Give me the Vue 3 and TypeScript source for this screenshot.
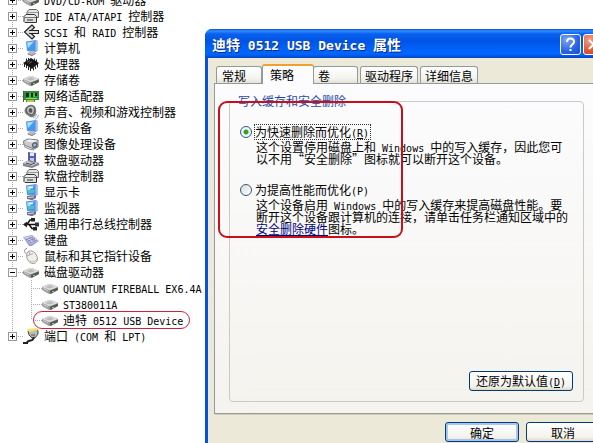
<script setup lang="ts">
import { ref } from 'vue'

interface Shape {
  d: string
  fill?: string
  stroke?: string
  width?: number
}

interface TreeNode {
  label: string
  icon: string
  open?: boolean
  children?: { label: string; marked?: boolean }[]
}

interface Run {
  text: string
  latin: boolean
}

const disk: Shape[] = [
  { d: 'M0 7 7 4 9 4 16 7V10L9 14H7L0 10Z', fill: '#9a9a9a' },
  { d: 'M0 7 7 4H9L16 7 9 10H7Z', fill: '#dcdcdc' },
  { d: 'M3 7 8 5 12 7 8 8.500Z', fill: '#bcbcbc' },
  { d: 'M8 10.500 16 7.500V10L9 13.500H8Z', fill: '#585858' },
  { d: 'M1 8.500 6 11', stroke: '#d0d0d0' },
  { d: 'M10 11h2v1h-2Z', fill: '#7ad37a' },
]

const drives: Shape[] = [
  { d: 'M4 4 6 1.500H13.500L15.500 3.500V9.500H4Z', fill: '#e4e4e4', stroke: '#666' },
  { d: 'M5 4.500H15', stroke: '#999' },
  { d: 'M1 8.500 3 6.500H11.500L13.500 8.500V14.500H2L1 13.500Z', fill: '#dedede', stroke: '#333' },
  { d: 'M1 9.500H13', stroke: '#777' },
  { d: 'M4 12H10', stroke: '#333' },
  { d: 'M3 8H11', stroke: '#fff' },
]

const computer: Shape[] = [
  { d: 'M3 1.500 13 0 14.500 1V11L12 12 4 11Z', fill: '#6d8fd0' },
  { d: 'M3.500 2 12 1V10L4.500 10Z', fill: '#3c9cf4' },
  { d: 'M4 2.500 11 1.500 5 8Z', fill: '#a8dcff' },
  { d: 'M12.500 0.500 14 1V10.500L12.500 11Z', fill: '#a9bce4' },
  { d: 'M7 11H11L13 13.500 9 16 4 14Z', fill: '#b4bccc' },
  { d: 'M5 14 9 15.500 12.500 13.500', stroke: '#77809a' },
]

const display: Shape[] = [
  ...computer,
  { d: 'M5 6 11 5.500V8.500L5 9.500Z', fill: '#4cc4c4' },
  { d: 'M6 3.500H10', stroke: '#fff' },
  { d: 'M4 12 13 11.500V14L9 16 4 15Z', fill: '#66758c' },
  { d: 'M5 13.500 11 13', stroke: '#d7dce5' },
]

const icons: Record<string, Shape[]> = {
  disk,
  drives,
  computer,
  display,
  dvd: [
    ...disk,
    { d: 'M3 5.500C4 3 12 3 13 5.500 12 8 4 8 3 5.500Z', fill: '#eee', stroke: '#999' },
  ],
  scsi: [
    { d: 'M9 1 1.500 8 9 15 11.500 12.500 6.500 8 11.500 3.500Z', fill: '#ddd', stroke: '#222', width: 1.2 },
    { d: 'M6 8H16', stroke: '#222', width: 4 },
    { d: 'M6 8H15', stroke: '#ddd', width: 2 },
  ],
  chip: [
    { d: 'M0 7 8 2 16 7 9 13Z', fill: '#161616' },
    { d: 'M1.500 8V11M3.500 9V12M5.500 10.500V14M7.500 11.500V15M10.500 12V14.500M12.500 10.500V13M14.500 8V11.500M3.500 2.500V5M5.500 2V4M11.500 2.500V5M13.500 3.500V6', stroke: '#222' },
    { d: 'M4 6.500 7 4.500M6 7.500 9 5.500', stroke: '#666' },
  ],
  network: [
    { d: 'M0 3H16V12H12V14H3V12H1Z', fill: '#2c8f35' },
    { d: 'M0.500 3V14', stroke: '#555' },
    { d: 'M3 5H6V9H3ZM8 5H10V9H8ZM12 5H14V8H12Z', fill: '#0a2b0d' },
    { d: 'M3 10.500H14M7 5V10M11 5V9', stroke: '#7cdc78' },
    { d: 'M4 12H11V14H4Z', fill: '#c7c34c' },
  ],
  speaker: [
    { d: 'M7 1C12 0 14 5 13 9 12 13 9 14 7 13L3 10C0 7 2 2 7 1Z', fill: '#777' },
    { d: 'M7 2C11 1 12 5 11 8 10 12 6 11 4 8 3 5 4 3 7 2Z', fill: '#c9c9d2', stroke: '#555' },
    { d: 'M7 4C10 4 10 8 8 9 5 9 5 5 7 4Z', fill: '#555' },
    { d: 'M10 14Q13 13 13.500 10M12 15.500Q15 14 15.500 11', stroke: '#9a9ee8' },
  ],
  camera: [
    { d: 'M0.500 5 5 3 15 4V11L11 13 1 9Z', fill: '#c8ccd2', stroke: '#777' },
    { d: 'M2 5 6 3.500 14 4.500 10 6.500Z', fill: '#f2f2f2' },
    { d: 'M11.500 6C15.500 5.500 15.500 12 11.500 12 8 12 8 6.500 11.500 6Z', fill: '#5b626e' },
    { d: 'M11.500 7.500C13.500 7.500 13.500 10.500 11.500 10.500 10 10.500 10 7.500 11.500 7.500Z', fill: '#a4c8e6' },
    { d: 'M1 10.500 6 13 11 14', stroke: '#888' },
  ],
  floppy: [
    { d: 'M5 0 13 1V11L5 10Z', fill: '#5660b0' },
    { d: 'M7 0.500H11V4H7Z', fill: '#e8e8f8' },
    { d: 'M7 6H11V10H7Z', fill: '#c4c9ee' },
    { d: 'M0 11 6 8 16 11V13L9 16 0 14Z', fill: '#80838e' },
    { d: 'M0 11 5 9 8 10.500H12L15 11 9 14Z', fill: '#d0d2d8' },
    { d: 'M3 11 8 12.500 12 11', stroke: '#444' },
  ],
  usb: [
    { d: 'M1 8.500H14M4 8.500 7 4H10M6 8.500 9 12.500H12', stroke: '#111', width: 1.5 },
    { d: 'M0 8.500 4 5.500V11.500ZM8 2H12V5.500H8ZM10 11H14V14.500H10Z', fill: '#222' },
    { d: 'M12 6.500H16V10.500H12Z', fill: '#333' },
  ],
  keyboard: [
    { d: 'M0 5 9 3 16 9 9 14 6 14Z', fill: '#9c9fd0' },
    { d: 'M1 5.500 9 4 15 9 8 12Z', fill: '#dcddf4' },
    { d: 'M3 6.500 9 11M6 5.500 12 10M8 5 13 9M3 7.500 10 5M5 9 12 6.500M7 11 14 8.500', stroke: '#8487bc' },
  ],
  mouse: [
    { d: 'M4 0.500C1 1 0.500 4 3.500 6', stroke: '#888' },
    { d: 'M4 5C6 1.500 11 2.500 13 6.500 16 11 14 15.500 10 15.500 6 15.500 2.500 10 4 5Z', fill: '#f0efea', stroke: '#9b9a94' },
    { d: 'M4 8 10 5.500M7 7 6 4', stroke: '#aaa' },
    { d: 'M7 13Q12 15 14 11', stroke: '#c2c0b8' },
  ],
  port: [
    { d: 'M5 3 14 1 15 3V6L12 10H9L6 7Z', fill: '#bcbcb4', stroke: '#444' },
    { d: 'M4 1 14 0 15 2 6 4Z', fill: '#f3e36c' },
    { d: 'M10.500 9Q11 12 7.500 12.500T4 15H0', stroke: '#222', width: 2 },
    { d: 'M8 7H12', stroke: '#555' },
  ],
}

const nodes = ref<TreeNode[]>([
  { label: 'DVD/CD-ROM 驱动器', icon: 'dvd' },
  { label: 'IDE ATA/ATAPI 控制器', icon: 'drives' },
  { label: 'SCSI 和 RAID 控制器', icon: 'scsi' },
  { label: '计算机', icon: 'computer' },
  { label: '处理器', icon: 'chip' },
  { label: '存储卷', icon: 'disk' },
  { label: '网络适配器', icon: 'network' },
  { label: '声音、视频和游戏控制器', icon: 'speaker' },
  { label: '系统设备', icon: 'computer' },
  { label: '图像处理设备', icon: 'camera' },
  { label: '软盘驱动器', icon: 'floppy' },
  { label: '软盘控制器', icon: 'drives' },
  { label: '显示卡', icon: 'display' },
  { label: '监视器', icon: 'display' },
  { label: '通用串行总线控制器', icon: 'usb' },
  { label: '键盘', icon: 'keyboard' },
  { label: '鼠标和其它指针设备', icon: 'mouse' },
  {
    label: '磁盘驱动器',
    icon: 'disk',
    open: true,
    children: [
      { label: 'QUANTUM FIREBALL EX6.4A' },
      { label: 'ST380011A' },
      { label: '迪特 0512 USB Device', marked: true },
    ],
  },
  { label: '端口 (COM 和 LPT)', icon: 'port' },
])

const tabs = ['常规', '策略', '卷', '驱动程序', '详细信息']
const activeTab = ref('策略')
const policy = ref('quick')

const quickText = ['这个设置停用磁盘上和 Windows 中的写入缓存\uff0c因此您可', '以不用“安全删除”图标就可以断开这个设备。']
const cacheText = ['这个设备启用 Windows 中的写入缓存来提高磁盘性能。要', '断开这个设备跟计算机的连接\uff0c请单击任务栏通知区域中的']

// Half-width and full-width characters are set in different faces.
function runs(text: string): Run[] {
  return (text.match(/[\x20-\x7e]+|[^\x20-\x7e]+/g) ?? []).map((t) => ({
    text: t,
    latin: /^[\x20-\x7e]/.test(t),
  }))
}
</script>

<template>
  <main class="desktop" lang="zh-CN">
    <ul class="tree">
      <li v-for="node in nodes" :key="node.label" class="node">
        <div class="row">
          <button
            class="expander"
            type="button"
            :aria-label="node.label"
            :aria-expanded="!!node.open"
            @click="node.open = !node.open"
          >
            <svg viewBox="0 0 9 9" width="9" height="9">
              <path :d="node.open ? 'M2 4.500H7' : 'M2 4.500H7M4.500 2V7'" stroke="#000" fill="none" />
            </svg>
          </button>
          <i class="link-line"></i>
          <svg class="icon" viewBox="0 0 16 16" width="16" height="16">
            <path
              v-for="(s, i) in icons[node.icon]"
              :key="i"
              :d="s.d"
              :fill="s.fill ?? 'none'"
              :stroke="s.stroke ?? 'none'"
              :stroke-width="s.width ?? 1"
            />
          </svg>
          <span class="label">
            <span v-for="(r, i) in runs(node.label)" :key="i" :class="{ latin: r.latin }">{{ r.text }}</span>
          </span>
        </div>
        <ul v-if="node.children && node.open" class="children">
          <li v-for="child in node.children" :key="child.label" class="row child" :class="{ marked: child.marked }">
            <i class="link-line long"></i>
            <svg class="icon" viewBox="0 0 16 16" width="16" height="16">
              <path
                v-for="(s, i) in icons.disk"
                :key="i"
                :d="s.d"
                :fill="s.fill ?? 'none'"
                :stroke="s.stroke ?? 'none'"
              />
            </svg>
            <span class="label">
              <span v-for="(r, i) in runs(child.label)" :key="i" :class="{ latin: r.latin }">{{ r.text }}</span>
            </span>
          </li>
        </ul>
      </li>
    </ul>

    <section class="dialog" role="dialog" aria-labelledby="dialog-title">
      <header class="titlebar">
        <h1 id="dialog-title">
          <span v-for="(r, i) in runs('迪特 0512 USB Device 属性')" :key="i" :class="{ latin: r.latin }">{{ r.text }}</span>
        </h1>
        <button class="caption help" type="button" aria-label="帮助">
          <svg viewBox="0 0 21 21" width="21" height="21">
            <path d="M7 8Q7 4.500 10.500 4.500T14 8C14 10 10.500 10.500 10.500 13.500" fill="none" stroke="#fff" stroke-width="2" />
            <path d="M9.500 15H11.500V17H9.500Z" fill="#fff" />
          </svg>
        </button>
        <button class="caption close" type="button" aria-label="关闭">
          <svg viewBox="0 0 21 21" width="21" height="21">
            <path d="M6 6 15 15M15 6 6 15" stroke="#fff" stroke-width="2" />
          </svg>
        </button>
      </header>

      <div class="body">
        <div class="tabs" role="tablist">
          <button
            v-for="tab in tabs"
            :key="tab"
            class="tab"
            :class="{ active: tab === activeTab, short: tab === '卷' }"
            type="button"
            role="tab"
            :aria-selected="tab === activeTab"
            @click="activeTab = tab"
          >
            {{ tab }}
          </button>
        </div>

        <div class="page" role="tabpanel">
          <fieldset class="group">
            <legend>写入缓存和安全删除</legend>

            <div class="option">
              <input id="quick" v-model="policy" type="radio" name="policy" value="quick" />
              <label for="quick" class="focused">为快速删除而优化<span class="latin">(<u>R</u>)</span></label>
              <p>
                <span v-for="line in quickText" :key="line" class="line">
                  <span v-for="(r, i) in runs(line)" :key="i" :class="{ latin: r.latin }">{{ r.text }}</span>
                </span>
              </p>
            </div>

            <div class="option">
              <input id="cache" v-model="policy" type="radio" name="policy" value="cache" />
              <label for="cache">为提高性能而优化<span class="latin">(P)</span></label>
              <p>
                <span v-for="line in cacheText" :key="line" class="line">
                  <span v-for="(r, i) in runs(line)" :key="i" :class="{ latin: r.latin }">{{ r.text }}</span>
                </span>
                <span class="line"><a href="#">安全删除硬件</a>图标。</span>
              </p>
            </div>

            <button class="push restore" type="button">还原为默认值<span class="latin">(<u>D</u>)</span></button>
          </fieldset>
          <div class="highlight"></div>
        </div>

        <footer class="actions">
          <button class="push default" type="button">确定</button>
          <button class="push" type="button">取消</button>
        </footer>
      </div>
    </section>
  </main>
</template>

<style>
body {
  overflow: hidden;
  background: #fff;
}
</style>

<style scoped>
* {
  box-sizing: border-box;
}

.desktop {
  display: grid;
  grid-template-columns: 205px 1fr;
  height: 100vh;
  overflow: hidden;
  color: #000;
  font: 12px/16px 'Noto Sans CJK SC', sans-serif;
}

button {
  padding: 0;
  color: inherit;
  font: inherit;
}

svg {
  display: block;
}

.latin {
  font-family: 'DejaVu Sans Mono', monospace;
  font-size: 10px;
  white-space: pre;
}

/* Device tree */
.tree,
.children {
  margin: 0;
  padding: 0;
  list-style: none;
}

.tree {
  margin-top: -8px;
}

.node {
  background: repeating-linear-gradient(#aaa 0 1px, transparent 1px 2px) 12px 0 / 1px 100% no-repeat;
}

.node:last-child {
  background-size: 1px 8px;
}

.row {
  display: flex;
  align-items: center;
  height: 16px;
  padding-left: 8px;
}

.expander {
  width: 9px;
  height: 9px;
  border: 0;
  background: #fff;
  outline: 1px solid #989898;
  outline-offset: -1px;
}

.link-line {
  width: 6px;
  height: 1px;
  background: repeating-linear-gradient(90deg, transparent 0 1px, #aaa 1px 2px);
}

.link-line.long {
  width: 10px;
}

.icon {
  flex: none;
}

.label {
  height: 16px;
  margin-left: 5px;
  line-height: 16px;
  white-space: nowrap;
}

.child {
  position: relative;
  padding-left: 32px;
  background: repeating-linear-gradient(#aaa 0 1px, transparent 1px 2px) 31px 0 / 1px 100% no-repeat;
}

.child:last-child {
  background-size: 1px 8px;
}

.marked::after {
  content: '';
  position: absolute;
  inset: -1px 15px -1px 33px;
  border: 1px solid #d0203c;
  border-radius: 9px;
}

/* Properties dialog */
.dialog {
  display: flex;
  flex-direction: column;
  min-width: 0;
  margin: 29px -16px -8px 0;
  border-left: 3px solid #0a50dc;
  border-top-left-radius: 7px;
  background: #ece9d8;
}

.titlebar {
  display: flex;
  align-items: center;
  gap: 2px;
  height: 29px;
  margin-left: -3px;
  padding: 2px 5px 0 7px;
  border-radius: 7px 0 0;
  background: linear-gradient(#0a50c8 0, #2f8cff 2px, #0a60ee 5px, #0054e3 12px, #0062fa 20px, #0066ff 25px, #0046c8 29px);
}

h1 {
  flex: 1;
  margin: 0;
  color: #fff;
  font-size: 14px;
  font-weight: 700;
  line-height: 20px;
  text-shadow: 1px 1px #0a2a80;
  white-space: nowrap;
}

h1 .latin {
  font-size: 13px;
}

.caption {
  flex: none;
  width: 21px;
  height: 21px;
  border: 1px solid #fff;
  border-radius: 3px;
}

.caption svg {
  margin: -1px;
}

.help {
  background: radial-gradient(circle at 30% 25%, #7ea6f5, #2a62e4 60%, #1d4fd0);
}

.close {
  background: radial-gradient(circle at 30% 25%, #f0a088, #dd5530 60%, #c03a18);
}

.body {
  display: flex;
  flex: 1;
  flex-direction: column;
  padding: 6px 12px 0 6px;
}

.tabs {
  display: flex;
  align-items: flex-end;
  height: 19px;
  padding-left: 2px;
}

.tab {
  height: 17px;
  margin-right: 2px;
  padding: 0 4px;
  border: 1px solid #919b9c;
  border-bottom: 0;
  border-radius: 3px 3px 0 0;
  background: linear-gradient(#fff, #f4f3ee 70%, #e4e2d8);
  line-height: 17px;
  text-align: left;
  white-space: nowrap;
}

.tab:first-child {
  width: 46px;
  margin-right: 0;
  padding-left: 5px;
}

.tab.short {
  width: 45px;
}

.tab.active {
  z-index: 1;
  width: 52px;
  height: 20px;
  margin: 0 -1px -1px 0;
  padding: 0 7px;
  border-top: 2px solid #f0a030;
  background: #fcfcfe;
  line-height: 16px;
}

.page {
  position: relative;
  display: flex;
  flex: 1;
  padding: 9px 12px 11px 14px;
  border: 1px solid #919b9c;
  box-shadow: 1px 1px #d0ceb8;
  background: linear-gradient(#fcfcfe, #f4f3ee);
}

.group {
  display: flex;
  flex: 1;
  flex-direction: column;
  min-width: 0;
  margin: 0;
  padding: 16px 10px 10px;
  border: 1px solid #cbcbc2;
  border-radius: 4px;
}

legend {
  margin-left: -3px;
  padding: 0 1px;
  color: #1e48a8;
}

.option {
  display: grid;
  grid-template-columns: 12px 1fr;
  column-gap: 3px;
  align-items: center;
  margin-bottom: 18px;
}

input {
  width: 12px;
  height: 12px;
  margin: 0;
  border: 1px solid #2c5a88;
  border-radius: 50%;
  background: linear-gradient(135deg, #dcdcd6, #fff);
  appearance: none;
}

input:checked {
  background: radial-gradient(circle, #28a428 0 2px, #f4f4f0 3px);
}

label {
  justify-self: start;
  height: 14px;
  padding: 0 1px 0 0;
  line-height: 14px;
  white-space: nowrap;
}

.focused {
  outline: 1px dotted #333;
}

p {
  grid-column: 2;
  margin: 2px 0 0 1px;
}

.line {
  display: block;
  height: 12px;
  line-height: 12px;
  white-space: nowrap;
}

a {
  color: #000080;
  text-decoration: underline;
  text-underline-offset: 1px;
}

.push {
  width: 74px;
  height: 20px;
  border: 1px solid #003c74;
  border-radius: 3px;
  background: linear-gradient(#fff, #f3f2ec 80%, #dcd8ca);
  line-height: 17px;
  white-space: nowrap;
}

.default {
  box-shadow: inset 0 0 0 2px #a8c4f0;
}

.restore {
  width: 104px;
  margin-top: auto;
  align-self: flex-end;
}

.highlight {
  position: absolute;
  top: 17px;
  left: 3px;
  width: 185px;
  height: 137px;
  border: 2px solid #c8101c;
  border-radius: 9px;
  pointer-events: none;
}

.actions {
  display: flex;
  justify-content: flex-end;
  gap: 7px;
  height: 37px;
  margin-right: -3px;
  padding: 8px 0 0;
}
</style>
